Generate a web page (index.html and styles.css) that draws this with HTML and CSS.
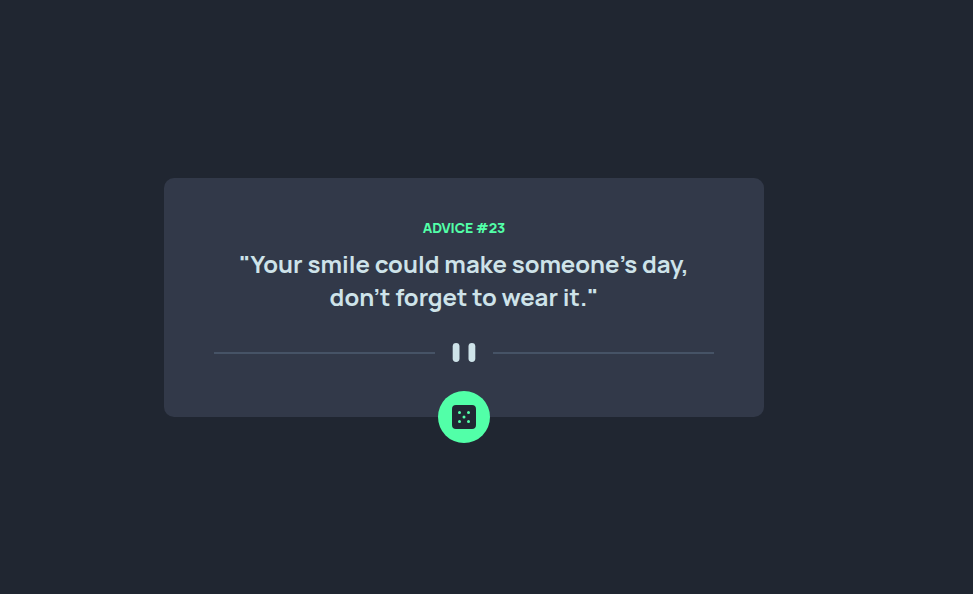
FILE: index.html
```html
<!DOCTYPE html>
<html lang="en">
<head>
<meta charset="utf-8">
<title>Advice generator</title>
<link rel="stylesheet" href="styles.css">
</head>
<body>
<main class="card">
  <h1 class="label">ADVICE #23</h1>
  <p class="quote"><span class="line">"Your smile could make someone’s day,</span><span class="line">don’t forget to wear it."</span></p>
  <svg class="divider" width="500" height="20" viewBox="0 0 500 20" aria-hidden="true">
    <path fill="#465366" d="M0 10h221v2H0zM279 10h221v2H279z"/>
    <rect x="238.700" y="1" width="6.800" height="19" rx="3.400" fill="#cee3e9"/>
    <rect x="254.500" y="1" width="6.800" height="19" rx="3.400" fill="#cee3e9"/>
  </svg>
  <button class="dice" aria-label="New advice">
    <svg width="24" height="24" viewBox="0 0 24 24"><path fill="#202733" d="M20 0H4a4.005 4.005 0 0 0-4 4v16a4.005 4.005 0 0 0 4 4h16a4.005 4.005 0 0 0 4-4V4a4.005 4.005 0 0 0-4-4ZM7.5 18a1.5 1.5 0 1 1 0-3 1.5 1.5 0 0 1 0 3Zm0-9a1.5 1.5 0 1 1 0-3 1.5 1.5 0 0 1 0 3Zm4.500 4.500a1.500 1.500 0 1 1 0-3 1.500 1.500 0 0 1 0 3Zm4.500 4.500a1.500 1.500 0 1 1 0-3 1.500 1.500 0 0 1 0 3Zm0-9a1.500 1.500 0 1 1 0-3 1.500 1.500 0 0 1 0 3Z"/></svg>
  </button>
</main>
</body>
</html>
```
FILE: styles.css
```css
* { box-sizing: border-box; }
body { margin: 0; min-height: 594px; display: flow-root; background: #202631; font-family: Manrope, Inter, sans-serif; }
.card {
  position: relative;
  width: 600px;
  height: 239px;
  margin: 178px 0 0 164px;
  padding: 40px 50px 0;
  border-radius: 10px;
  background: #323949;
  display: flex;
  flex-direction: column;
  align-items: center;
}
.label { margin: 0; font-size: 14px; line-height: 20px; font-weight: 800; letter-spacing: -0.12px; color: #52ffa8; }
.quote { margin: 9px 0 0; font-size: 24px; line-height: 33px; font-weight: 700; color: #cee3e9; text-align: center; white-space: nowrap; }
.line { display: block; }
.divider { margin-top: 29px; flex: none; }
.dice {
  position: absolute;
  left: 274px;
  bottom: -26px;
  width: 52px;
  height: 52px;
  padding: 0;
  border: 0;
  border-radius: 50%;
  background: #52ffa8;
  display: grid;
  place-items: center;
}
```
